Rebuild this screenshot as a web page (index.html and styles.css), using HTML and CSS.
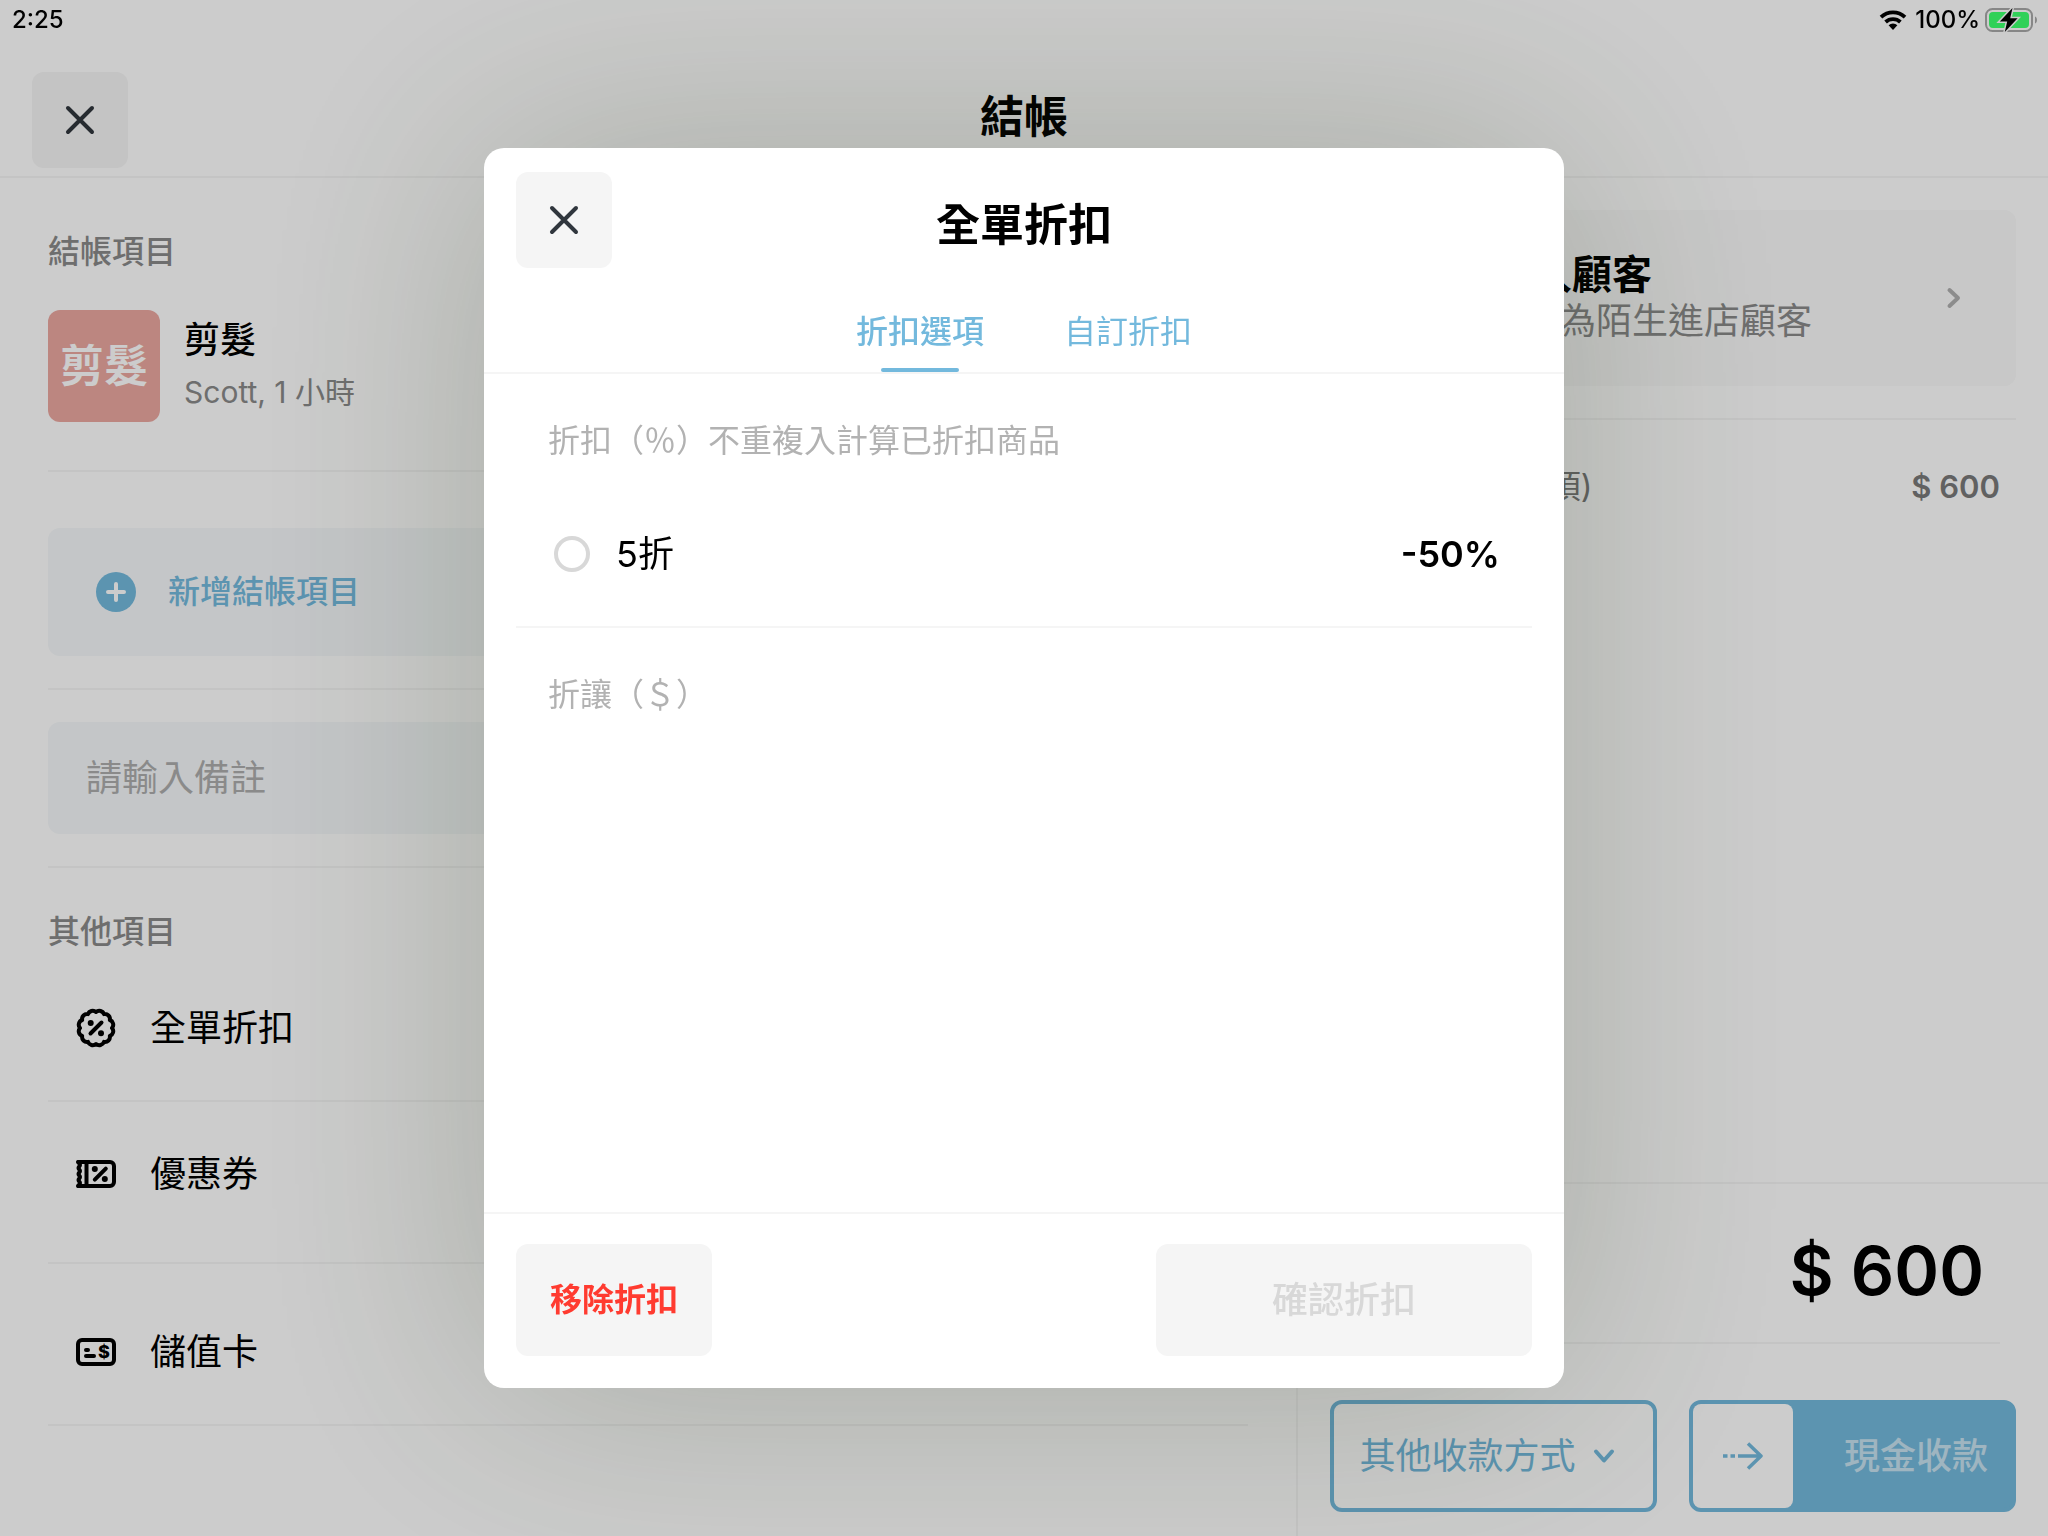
FILE: index.html
```html
<!DOCTYPE html>
<html lang="zh-Hant">
<head>
<meta charset="utf-8">
<meta name="viewport" content="width=device-width, initial-scale=1">
<title>結帳</title>
<link rel="stylesheet" href="styles.css">
</head>
<body>
<div class="app">
  <div class="status">
    <span>2:25</span>
    <div class="status-right">
      <svg class="wifi" width="28" height="20" viewBox="0 0 28 20" aria-hidden="true">
        <path d="M2 7.2a17.4 17.4 0 0 1 24 0" fill="none" stroke="#000" stroke-width="3.8"/>
        <path d="M6.6 12a10.8 10.8 0 0 1 14.8 0" fill="none" stroke="#000" stroke-width="3.8"/>
        <path d="M14 20l-4.4-4.8a6.4 6.4 0 0 1 8.800 0z"/>
      </svg>
      <span>100%</span>
      <svg width="54" height="26" viewBox="0 0 54 26" aria-hidden="true">
        <rect x="1" y="2" width="46" height="22" rx="6.500" fill="none" stroke="#868686" stroke-width="2"/>
        <path d="M50 9.500c2.600.8 2.600 6.200 0 7z" fill="#868686"/>
        <rect x="4" y="5" width="40" height="16" rx="4" fill="#30d158"/>
        <path d="M27.500 1L14.800 14.600h7.400L19.800 25l12.800-13.800h-7.400z" fill="#000" stroke="#cbcbcb" stroke-width="3" paint-order="stroke"/>
      </svg>
    </div>
  </div>

  <header class="topbar">
    <button class="icon-btn" type="button" aria-label="關閉">
      <svg width="32" height="32" viewBox="0 0 32 32" aria-hidden="true"><path d="M4 4l24 24M28 4L4 28"/></svg>
    </button>
    <h1 class="page-title">結帳</h1>
  </header>

  <main class="columns">
    <section class="order">
      <h2 class="label">結帳項目</h2>
      <div class="service">
        <div class="tile">剪髮</div>
        <div>
          <div class="service-name">剪髮</div>
          <div class="service-meta">Scott, 1 小時</div>
        </div>
      </div>
      <hr class="rule">
      <button class="add-item" type="button">
        <svg width="40" height="40" viewBox="0 0 40 40" aria-hidden="true">
          <circle cx="20" cy="20" r="20" fill="#73b9dd"/>
          <path d="M20 12v16M12 20h16" stroke="#fff" stroke-width="4" stroke-linecap="round"/>
        </svg>
        <span>新增結帳項目</span>
      </button>
      <hr class="rule">
      <input class="note" type="text" placeholder="請輸入備註" aria-label="備註">
      <hr class="rule">
      <h2 class="label label-other">其他項目</h2>
      <ul class="extras">
        <li>
          <button class="extra" type="button">
            <svg width="40" height="40" viewBox="0 0 40 40" aria-hidden="true" fill="none" stroke="#000" stroke-width="4" stroke-linecap="round" stroke-linejoin="round">
              <path d="M20 4A5 5 0 0 1 28 6.140A5 5 0 0 1 33.860 12A5 5 0 0 1 36 20A5 5 0 0 1 33.860 28A5 5 0 0 1 28 33.860A5 5 0 0 1 20 36A5 5 0 0 1 12 33.860A5 5 0 0 1 6.140 28A5 5 0 0 1 4 20A5 5 0 0 1 6.140 12A5 5 0 0 1 12 6.140A5 5 0 0 1 20 4z"/>
              <path d="M14.500 25.500l11-11"/>
              <circle cx="14.700" cy="15" r="3" fill="#000" stroke="none"/>
              <circle cx="25" cy="25.200" r="3" fill="#000" stroke="none"/>
            </svg>
            <span>全單折扣</span>
          </button>
        </li>
        <li>
          <button class="extra" type="button">
            <svg width="40" height="28" viewBox="0 0 40 28" aria-hidden="true" fill="none" stroke="#000" stroke-width="4" stroke-linecap="round" stroke-linejoin="round">
              <path d="M2 2h32a4 4 0 0 1 4 4v16a4 4 0 0 1-4 4H2"/>
              <path d="M2.500 2c0 1.500 1.500 1.500 1.500 3s-1.500 1.500-1.500 3 1.500 1.500 1.500 3-1.500 1.500-1.500 3 1.500 1.500 1.500 3-1.500 1.500-1.500 3 1.500 1.500 1.500 3-1.500 1.500-1.500 3"/>
              <path d="M10.500 3v22M18.800 19.700l11-11"/>
              <circle cx="18.800" cy="9" r="3" fill="#000" stroke="none"/>
              <circle cx="28.800" cy="19" r="3" fill="#000" stroke="none"/>
            </svg>
            <span>優惠券</span>
          </button>
        </li>
        <li>
          <button class="extra" type="button">
            <svg width="40" height="28" viewBox="0 0 40 28" aria-hidden="true" fill="none" stroke="#000" stroke-width="4" stroke-linecap="round">
              <rect x="2" y="2" width="36" height="24" rx="4"/>
              <path d="M10 12h2M10 18h8"/>
              <text class="card-sign" x="28" y="20" text-anchor="middle">$</text>
            </svg>
            <span>儲值卡</span>
          </button>
        </li>
      </ul>
    </section>

    <section class="summary">
      <div class="summary-top">
        <button class="customer" type="button">
          <span class="avatar"></span>
          <span class="customer-text">
            <span class="customer-name">未登入顧客</span>
            <span class="customer-hint">系統將為陌生進店顧客</span>
          </span>
          <svg width="32" height="32" viewBox="0 0 32 32" aria-hidden="true"><path d="M11.500 8l8.500 8-8.500 8" fill="none" stroke="#b0b0b0" stroke-width="4" stroke-linecap="round" stroke-linejoin="round"/></svg>
        </button>
        <hr class="rule">
        <div class="subtotal">
          <span>消費金額 (共1 項)</span>
          <span class="subtotal-value">$ 600</span>
        </div>
      </div>
      <div class="checkout">
        <div class="total">$ 600</div>
        <div class="pay">
          <button class="pay-other" type="button">
            <span>其他收款方式</span>
            <svg width="32" height="32" viewBox="0 0 32 32" aria-hidden="true"><path d="M8 11.500l8 9 8-9" fill="none" stroke="#73b9dd" stroke-width="4" stroke-linecap="round" stroke-linejoin="round"/></svg>
          </button>
          <button class="pay-cash" type="button">
            <span class="slider">
              <svg width="40" height="32" viewBox="0 0 40 32" aria-hidden="true"><path d="M0 16h4.500M7.500 16h4.500M15 16h22.500M25 3.500l13 12.500-13 12.500" fill="none" stroke="#73b9dd" stroke-width="3.500" stroke-linejoin="round"/></svg>
            </span>
            <span class="cash-text">現金收款</span>
          </button>
        </div>
      </div>
    </section>
  </main>
</div>

<div class="overlay">
  <div class="modal" role="dialog" aria-modal="true" aria-labelledby="modal-title">
    <div class="modal-head">
      <button class="icon-btn" type="button" aria-label="關閉">
        <svg width="32" height="32" viewBox="0 0 32 32" aria-hidden="true"><path d="M4 4l24 24M28 4L4 28"/></svg>
      </button>
      <h2 class="modal-title" id="modal-title">全單折扣</h2>
    </div>
    <div class="tabs" role="tablist">
      <button class="tab tab-active" type="button" role="tab" aria-selected="true">折扣選項</button>
      <button class="tab" type="button" role="tab" aria-selected="false">自訂折扣</button>
    </div>
    <div class="modal-body">
      <h3 class="group">折扣（％）不重複入計算已折扣商品</h3>
      <label class="option">
        <input class="radio" type="radio" name="discount">
        <span>5折</span>
        <span class="percent">-50%</span>
      </label>
      <hr class="rule">
      <h3 class="group">折讓（＄）</h3>
    </div>
    <div class="modal-foot">
      <button class="remove" type="button">移除折扣</button>
      <button class="confirm" type="button" disabled>確認折扣</button>
    </div>
  </div>
</div>
</body>
</html>
```
FILE: styles.css
```css
:root {
  --blue: #73b9dd;
  --line: #f5f5f5;
  --gray: #8a8a8a;
  --pale: #b2b2b2;
}

* {
  box-sizing: border-box;
}

body {
  margin: 0;
  background: #fff;
  color: #000;
  font-family: "Inter", "Noto Sans CJK TC", sans-serif;
  font-size: 36px;
  line-height: 48px;
}

h1,
h2,
h3,
ul {
  margin: 0;
  padding: 0;
  list-style: none;
}

button {
  margin: 0;
  padding: 0;
  border: 0;
  background: none;
  color: inherit;
  font: inherit;
  text-align: left;
}

svg {
  display: block;
  flex: none;
}

.app {
  display: flex;
  flex-direction: column;
  min-height: 100vh;
}

/* Status bar stays above the dimmed page */
.status {
  position: relative;
  z-index: 2;
  display: flex;
  justify-content: space-between;
  padding: 0 9px 0 12px;
  font-size: 24px;
  font-weight: 500;
  line-height: 40px;
}

.status-right {
  display: flex;
  align-items: center;
  gap: 5px;
}

.wifi {
  margin-right: 3px;
}

.topbar,
.modal-head {
  display: grid;
  grid-template-columns: 96px 1fr 96px;
  padding: 32px 32px 8px;
}

.topbar {
  border-bottom: 2px solid var(--line);
}

.icon-btn {
  display: grid;
  place-items: center;
  width: 96px;
  height: 96px;
  border-radius: 12px;
  background: #f5f5f5;
}

.icon-btn path {
  fill: none;
  stroke: #30363d;
  stroke-width: 4;
  stroke-linecap: round;
}

.page-title,
.modal-title {
  font-size: 44px;
  font-weight: 700;
  line-height: 90px;
  text-align: center;
}

.columns {
  flex: 1;
  display: grid;
  grid-template-columns: minmax(0, 1296fr) minmax(0, 752fr);
}

.rule {
  width: 100%;
  height: 2px;
  margin: 0;
  border: 0;
  background: var(--line);
}

/* Left column */
.order {
  padding: 50px 48px 0;
}

.label {
  color: var(--gray);
  font-size: 32px;
  font-weight: 500;
}

.label-other {
  margin-top: 40px;
}

.service {
  display: flex;
  align-items: center;
  gap: 24px;
  padding: 34px 0 48px;
}

.tile {
  display: grid;
  place-items: center;
  width: 112px;
  height: 112px;
  border-radius: 12px;
  background: #eba8a1;
  color: #fff;
  font-size: 44px;
  font-weight: 700;
}

.service-name {
  font-weight: 500;
}

.service-meta {
  margin-top: 4px;
  color: var(--gray);
  font-size: 30px;
}

.add-item {
  display: flex;
  align-items: center;
  gap: 32px;
  width: 100%;
  height: 128px;
  margin: 56px 0 32px;
  padding: 0 48px;
  border-radius: 12px;
  background: #f5f8fa;
  color: var(--blue);
  font-size: 32px;
  font-weight: 500;
}

.note {
  display: block;
  width: 100%;
  height: 112px;
  margin: 32px 0;
  padding: 0 38px;
  border: 0;
  border-radius: 12px;
  background: #f5f8fa;
  font: inherit;
}

.note::placeholder {
  color: #adadad;
  opacity: 1;
}

.extra {
  display: flex;
  align-items: center;
  gap: 34px;
  width: 100%;
  height: 144px;
  padding: 0 28px;
}

.extras li {
  padding-bottom: 16px;
  border-bottom: 2px solid var(--line);
}

.extras li:first-child,
.extras li:last-child {
  padding-bottom: 0;
}

.extras li:last-child {
  padding-top: 16px;
}

.card-sign {
  fill: #000;
  stroke: none;
  font-size: 18px;
  font-weight: 800;
}

/* Right column */
.summary {
  display: flex;
  flex-direction: column;
  justify-content: space-between;
  border-left: 2px solid var(--line);
}

.summary-top {
  padding: 32px 32px 0;
}

.customer {
  display: flex;
  align-items: center;
  gap: 24px;
  width: 100%;
  height: 176px;
  margin-bottom: 32px;
  padding: 0 46px 0 26px;
  border-radius: 12px;
  background: #fafafa;
}

.avatar {
  width: 72px;
  height: 72px;
  border-radius: 50%;
  background: #e6e6e6;
}

.customer-text {
  flex: 1;
  display: flex;
  flex-direction: column;
  line-height: 46px;
}

.customer-name {
  font-size: 40px;
  font-weight: 700;
}

.customer-hint {
  color: var(--gray);
}

.subtotal {
  display: flex;
  justify-content: space-between;
  margin-top: 43px;
  padding: 0 16px;
  color: #7a7a7a;
  font-size: 32px;
}

.subtotal-value {
  font-size: 31px;
  font-weight: 600;
}

.checkout {
  border-top: 2px solid var(--line);
}

.total {
  margin: 0 48px 0 32px;
  padding: 14px 16px 0;
  border-bottom: 2px solid var(--line);
  font-size: 68px;
  font-weight: 600;
  line-height: 144px;
  text-align: right;
}

.pay {
  display: grid;
  grid-template-columns: 1fr 1fr;
  gap: 32px;
  padding: 56px 32px 24px;
}

.pay-other,
.pay-cash {
  display: flex;
  align-items: center;
  height: 112px;
  border: 4px solid var(--blue);
  border-radius: 12px;
}

.pay-other {
  justify-content: center;
  gap: 12px;
  padding-right: 8px;
  color: var(--blue);
}

.pay-cash {
  justify-content: space-between;
  padding-right: 24px;
  background: var(--blue);
  color: #fff;
}

.slider {
  display: grid;
  place-items: center;
  width: 100px;
  height: 104px;
  border-radius: 8px;
  background: #fff;
}

.cash-text {
  font-weight: 500;
  opacity: 0.6;
}

/* Dialog */
.overlay {
  position: fixed;
  inset: 0;
  z-index: 1;
  display: grid;
  place-items: center;
  background: rgba(0, 0, 0, 0.2);
}

.modal {
  display: flex;
  flex-direction: column;
  width: min(1080px, 100vw - 64px);
  height: calc(100vh - 296px);
  border-radius: 20px;
  background: #fff;
  box-shadow: 0 0 240px rgba(39, 56, 22, 0.23);
}

.modal-head {
  height: 120px;
  padding: 24px 32px 0;
}

.modal-title {
  line-height: 106px;
}

.tabs {
  display: flex;
  justify-content: center;
  gap: 80px;
  border-bottom: 2px solid var(--line);
}

.tab {
  display: flex;
  flex-direction: column;
  align-items: center;
  height: 104px;
  padding-top: 40px;
  color: var(--blue);
  font-size: 32px;
}

.tab-active {
  font-weight: 500;
}

.tab-active::after {
  content: "";
  width: 78px;
  height: 4px;
  margin-top: auto;
  border-radius: 2px;
  background: var(--blue);
}

.modal-body {
  flex: 1;
  padding: 0 32px;
}

.group {
  padding: 43px 32px 0;
  color: var(--pale);
  font-size: 32px;
  font-weight: 400;
}

.option {
  display: flex;
  align-items: center;
  height: 144px;
  margin-top: 17px;
  padding: 0 32px 0 38px;
}

.radio {
  appearance: none;
  width: 36px;
  height: 36px;
  margin: 0 26px 0 0;
  border: 4px solid #d8d8d8;
  border-radius: 50%;
  background: #fff;
}

.percent {
  margin-left: auto;
  font-weight: 600;
}

.modal-foot {
  display: flex;
  justify-content: space-between;
  padding: 30px 32px 32px;
  border-top: 2px solid var(--line);
}

.remove,
.confirm {
  height: 112px;
  border-radius: 12px;
  background: #f5f5f5;
  text-align: center;
}

.remove {
  padding: 0 34px;
  color: #ff3b30;
  font-size: 32px;
  font-weight: 700;
}

.confirm {
  width: 376px;
  color: #d8d8d8;
  font-weight: 500;
}
```
